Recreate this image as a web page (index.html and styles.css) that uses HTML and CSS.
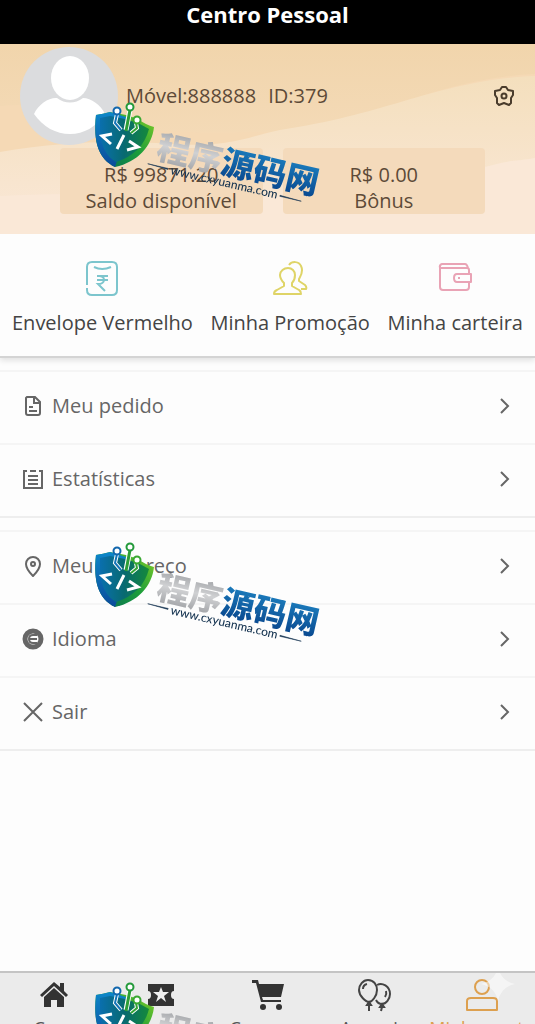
FILE: index.html
```html
<!DOCTYPE html>
<html lang="pt">
  <head>
    <meta charset="UTF-8" />
    <meta name="viewport" content="width=device-width, initial-scale=1.0" />
    <title>Centro Pessoal</title>
    <link rel="stylesheet" href="styles.css">
  </head>
  <body>
    <header class="topbar">
      <h1>Centro Pessoal</h1>
    </header>

    <main>
      <section class="profile">
        <svg class="waves" viewBox="0 0 535 190" preserveAspectRatio="none" aria-hidden="true">
          <defs>
            <linearGradient id="sand" x1="0" y1="0" x2="0" y2="1">
              <stop offset="0" stop-color="#f1d5ac" />
              <stop offset="1" stop-color="#f7dfc2" />
            </linearGradient>
            <linearGradient id="cream" x1="0" y1="0" x2="0" y2="1">
              <stop offset="0" stop-color="#f4dfbd" />
              <stop offset="1" stop-color="#fae8d8" />
            </linearGradient>
          </defs>
          <path d="M0 0H535V190H0Z" fill="url(#sand)" />
          <path d="M0 62C60 56 100 82 150 86S230 88 280 88C380 74 440 34 535 30V190H0Z" fill="#f5d9b5" />
          <path d="M0 108C60 98 110 96 170 100S250 92 280 86C390 70 440 36 535 32V190H0Z" fill="url(#cream)" />
          <path d="M0 152C120 144 330 166 430 138S500 120 535 114V190H0Z" fill="#fae8d7" />
        </svg>
        <div class="user">
          <svg class="avatar" viewBox="0 0 98 98" aria-hidden="true">
            <circle cx="49" cy="49" r="49" fill="#dbdcde" />
            <ellipse cx="50" cy="31" rx="19" ry="22" fill="#fff" />
            <path d="M14 67C18 57 30 50 37 51C45 57 55 57 63 51C71 51 81 58 85 67C76 80 64 87 50 87S23 80 14 67Z" fill="#fff" />
          </svg>
          <p class="user-info"><span>Móvel:888888</span><span>ID:379</span></p>
          <button class="settings" type="button" aria-label="Configurações">
            <svg width="22" height="22" viewBox="0 0 22 22" fill="none" stroke="#4a3c2c" stroke-width="2" stroke-linejoin="round" aria-hidden="true">
              <path d="M7 5L9 2H13L15 5L20 6L20 10L18 13L18 18L16 20L11 18L6 20L4 18V13L2 10L2 6Z" />
              <circle cx="11" cy="11" r="2.500" />
            </svg>
          </button>
        </div>
        <div class="balances">
          <div class="balance"><span>R$ 99871.20</span><span>Saldo disponível</span></div>
          <div class="balance"><span>R$ 0.00</span><span>Bônus</span></div>
        </div>
      </section>

      <nav class="shortcuts">
        <a href="#envelope">
          <svg width="36" height="38" viewBox="0 0 36 38" fill="none" stroke="#7cc5cd" stroke-width="2" aria-hidden="true">
            <path d="M3 25V7Q3 2 8 2H28Q33 2 33 7V30Q33 35 28 35H8Q3 35 3 30V28" />
            <path d="M10 7Q18 11 27 7" />
            <path d="M13 16H24M13 20H24M14 16C22 15 22 24 14 24L21 31" />
          </svg>
          <span>Envelope Vermelho</span>
        </a>
        <a href="#promocao">
          <svg width="36" height="38" viewBox="0 0 36 38" fill="none" stroke="#dfd467" stroke-width="2" stroke-linejoin="round" aria-hidden="true">
            <path d="M16 8C20 8 23 11 23 15C23 19 22 21 20 23V26L27 30Q29 31 29 34H2Q2 31 5 30L12 26V23C10 21 8 19 8 15C8 11 12 8 16 8Z" />
            <path d="M17 5C20 1 27 1 29 6C32 12 28 17 27 19V21L33 25Q35 27 34 29H29" />
          </svg>
          <span>Minha Promoção</span>
        </a>
        <a href="#carteira">
          <svg width="36" height="38" viewBox="0 0 36 38" fill="none" stroke="#e9a3b5" stroke-width="2" stroke-linejoin="round" aria-hidden="true">
            <path d="M32 14V10Q32 8 30 8H3M3 8Q2 5 5 4H28Q30 4 31 8M3 6V27Q3 30 6 30H29Q32 30 32 27V22" />
            <path d="M34 14H20Q17 14 17 18T20 22H34Z" />
            <path d="M21 18H23" />
          </svg>
          <span>Minha carteira</span>
        </a>
      </nav>

      <ul class="menu">
        <li>
          <a href="#pedido">
            <svg class="icon" viewBox="0 0 22 22" aria-hidden="true">
              <path d="M5 2H13L18 7V18Q18 20 16 20H6Q4 20 4 18V3ZM12 2V8H18M7 12H11M7 16H15" />
            </svg>
            <span>Meu pedido</span>
            <svg class="arrow" viewBox="0 0 12 20" aria-hidden="true"><path d="M2 3L9 10L2 17" /></svg>
          </a>
        </li>
        <li>
          <a href="#estatisticas">
            <svg class="icon" viewBox="0 0 22 22" aria-hidden="true">
              <path d="M5 3H2V20H20V3H17M8 3H14M6 8H16M6 12H16M6 16H16" />
            </svg>
            <span>Estatísticas</span>
            <svg class="arrow" viewBox="0 0 12 20" aria-hidden="true"><path d="M2 3L9 10L2 17" /></svg>
          </a>
        </li>
      </ul>

      <ul class="menu">
        <li>
          <a href="#endereco">
            <svg class="icon" viewBox="0 0 22 22" aria-hidden="true">
              <path d="M11 21C6 16 4 13 4 9A7 7 0 0 1 18 9C18 13 16 16 11 21Z" />
              <circle cx="11" cy="9" r="2" />
            </svg>
            <span>Meu endereço</span>
            <svg class="arrow" viewBox="0 0 12 20" aria-hidden="true"><path d="M2 3L9 10L2 17" /></svg>
          </a>
        </li>
        <li>
          <a href="#idioma">
            <svg class="icon" viewBox="0 0 22 22" aria-hidden="true">
              <circle cx="11" cy="11" r="8" stroke-width="5" />
              <path d="M15 7H11Q7 7 7 11T11 15H15M8 11H15" />
            </svg>
            <span>Idioma</span>
            <svg class="arrow" viewBox="0 0 12 20" aria-hidden="true"><path d="M2 3L9 10L2 17" /></svg>
          </a>
        </li>
        <li>
          <a href="#sair">
            <svg class="icon" viewBox="0 0 22 22" aria-hidden="true">
              <path d="M2 2L20 20M20 2L2 20" />
            </svg>
            <span>Sair</span>
            <svg class="arrow" viewBox="0 0 12 20" aria-hidden="true"><path d="M2 3L9 10L2 17" /></svg>
          </a>
        </li>
      </ul>
    </main>

    <nav class="tabbar">
      <a href="#casa">
        <svg width="36" height="36" viewBox="0 0 36 36" fill="#333" aria-hidden="true">
          <path d="M4 18L18 5L24 10V6H28V14L32 18L30 20L18 9L6 20Z" />
          <path d="M8 20L18 11L28 20V30H21V23H15V30H8Z" />
        </svg>
        <span>Casa</span>
      </a>
      <a href="#ganhar">
        <svg width="36" height="36" viewBox="0 0 36 36" fill="#333" aria-hidden="true">
          <path d="M5 7H31V14Q28 14 28 18T31 22V29H5V22Q8 22 8 18T5 14Z" />
          <path d="M18 10L20 15H26L21 19L23 25L18 21L13 25L15 19L10 15H16Z" fill="#f0f0f0" />
        </svg>
        <span>Ganhar</span>
      </a>
      <a href="#compras">
        <svg width="36" height="36" viewBox="0 0 36 36" fill="#333" aria-hidden="true">
          <path d="M2 3H8L9 7H34L31 20H12L13 23H31V25H11L6 6H2Z" />
          <circle cx="13" cy="30" r="3" />
          <circle cx="29" cy="30" r="3" />
        </svg>
        <span>Compras</span>
      </a>
      <a href="#anuncio">
        <svg width="36" height="36" viewBox="0 0 36 36" fill="none" stroke="#444" stroke-width="2" aria-hidden="true">
          <path d="M20 8C25 5 33 9 33 17C33 22 29 27 25 27C22 27 20 25 19 23" />
          <path d="M11 3C17 3 20 8 20 13C20 19 15 25 12 25S2 19 2 13C2 8 6 3 11 3Z" />
          <path d="M6 12Q6 8 10 7M28 20Q30 17 29 14" />
          <path d="M12 25L10 28H14ZM12 28V34M25 27L23 30H27ZM25 30L24 34" />
        </svg>
        <span>Anuncio</span>
      </a>
      <a href="#minha" class="active">
        <svg width="36" height="36" viewBox="0 0 36 36" fill="none" stroke="#dda04f" stroke-width="2" stroke-linejoin="round" aria-hidden="true">
          <circle cx="18" cy="10" r="7" />
          <path d="M3 33V24Q3 21 7 21H29Q33 21 33 24V33Z" />
        </svg>
        <span>Minha conta</span>
      </a>
      <svg class="sparkle" viewBox="0 0 34 34" aria-hidden="true">
        <path d="M17 0Q20 14 34 17Q20 20 17 34Q14 20 0 17Q14 14 17 0Z" fill="#fff" fill-opacity=".5" />
      </svg>
    </nav>

    <div class="watermarks" aria-hidden="true">
      <svg class="watermark" viewBox="0 0 240 115">
        <defs>
          <linearGradient id="shieldLeft" x1="0" y1="0" x2="0" y2="1">
            <stop offset="0" stop-color="#0d87c9" />
            <stop offset="1" stop-color="#0b4b9a" />
          </linearGradient>
          <linearGradient id="shieldRight" x1="1" y1="0" x2="0" y2="1">
            <stop offset="0" stop-color="#86d024" />
            <stop offset=".5" stop-color="#1a9c3c" />
            <stop offset="1" stop-color="#076a58" />
          </linearGradient>
          <linearGradient id="shieldInner" x1="0" y1="0" x2="1" y2="0">
            <stop offset="0" stop-color="#0a6fae" />
            <stop offset=".5" stop-color="#086a70" />
            <stop offset="1" stop-color="#158a3a" />
          </linearGradient>
          <linearGradient id="silver" x1="0" y1="0" x2="0" y2="1">
            <stop offset="0" stop-color="#8f9296" />
            <stop offset=".5" stop-color="#d0d1d3" />
            <stop offset="1" stop-color="#96989c" />
          </linearGradient>
          <linearGradient id="blue" x1="0" y1="0" x2="0" y2="1">
            <stop offset="0" stop-color="#2089c8" />
            <stop offset="1" stop-color="#063f87" />
          </linearGradient>
          <g id="brand">
            <path d="M6 20Q13 19 20 17L36 20L48 24Q56 30 64 32C62 51 48 67 25 72C9 64 3 48 6 20Z" fill="url(#shieldRight)" />
            <path d="M6 20Q13 19 20 17L36 22L35 40L25 72C9 64 3 48 6 20Z" fill="url(#shieldLeft)" />
            <path d="M10 23L20 21L35 24L48 28L59 34C55 50 43 62 26 67C14 60 9 47 10 23Z" fill="url(#shieldInner)" />
            <g fill="none" stroke="#fff" stroke-width="4">
              <path d="M27 19L25 28L31 35M46 28L47 33L41 38" />
              <path d="M40 15L36 35" stroke-width="5" />
            </g>
            <g fill="none" stroke-width="2">
              <path d="M27 19L25 28L31 35" stroke="#1474b8" />
              <path d="M40 15L36 36" stroke="#2d9e38" stroke-width="3" />
              <path d="M46 28L47 33L41 38" stroke="#35a534" />
              <circle cx="27" cy="16" r="3.500" stroke="#1267ad" fill="#fff" />
              <circle cx="40" cy="12" r="3.500" stroke="#249a3b" fill="#fff" />
              <circle cx="47" cy="25" r="3.500" stroke="#3aa832" fill="#fff" />
            </g>
            <path d="M22 39L12 41L21 49M34 40L27 54M39 46L48 52L37 55" fill="none" stroke="#fff" stroke-width="3" />
            <g transform="translate(65 63) rotate(13)">
              <text class="brand-name"><tspan fill="url(#silver)">程序</tspan><tspan fill="url(#blue)">源码网</tspan></text>
            </g>
            <g transform="translate(80 79) rotate(13)">
              <text class="brand-url">www.cxyuanma.com</text>
              <path d="M-24 -5L-3 -5V-4ZM112 -4V-3L134 -3Z" fill="#163451" stroke="#163451" stroke-width=".5" />
            </g>
          </g>
        </defs>
        <use href="#brand" />
      </svg>
      <svg class="watermark" viewBox="0 0 240 115"><use href="#brand" /></svg>
      <svg class="watermark" viewBox="0 0 240 115"><use href="#brand" /></svg>
    </div>
  </body>
</html>
```
FILE: styles.css
```css
* {
  box-sizing: border-box;
}
body {
  margin: 0;
  height: 100vh;
  overflow: hidden;
  display: flex;
  flex-direction: column;
  font-family: "Open Sans", "Noto Sans", sans-serif;
  font-size: 20px;
  line-height: 26px;
  color: #444;
  background-color: #fdfdfd;
}
a {
  color: inherit;
  text-decoration: none;
}
.topbar {
  height: 44px;
  background-color: #000;
  color: #fff;
  text-align: center;
}
.topbar h1 {
  margin: 0;
  font-size: 22px;
  line-height: 28px;
}
main {
  flex: 1;
  min-height: 0;
}
.profile {
  position: relative;
  height: 190px;
  color: #5d4a38;
}
.waves {
  position: absolute;
  width: 100%;
  height: 100%;
}
.user {
  position: relative;
  display: flex;
  align-items: center;
  height: 104px;
  padding: 0 20px;
}
.avatar {
  width: 98px;
  height: 98px;
}
.user-info {
  flex: 1;
  display: flex;
  gap: 12px;
  margin: 0 8px;
}
.settings {
  padding: 0;
  border: none;
  background: none;
  line-height: 0;
  cursor: pointer;
}
.balances {
  position: relative;
  display: grid;
  grid-template-columns: 1fr 1fr;
  gap: 20px;
  padding: 0 50px 0 60px;
}
.balance {
  display: flex;
  flex-direction: column;
  align-items: center;
  padding: 14px 0 0;
  border-radius: 4px;
  background-color: #f4dabb;
}
.shortcuts {
  display: flex;
  justify-content: space-between;
  height: 124px;
  padding: 26px 12px 0;
  border-bottom: 2px solid #d4d4d4;
  box-shadow: 0 2px 6px #ddd;
}
.shortcuts a {
  display: flex;
  flex-direction: column;
  align-items: center;
  gap: 12px;
}
.menu {
  margin: 12px 0 0;
  padding: 0;
  list-style: none;
  color: #666;
  border-top: 2px solid #f5f5f5;
  border-bottom: 2px solid #eee;
}
.menu li + li {
  border-top: 2px solid #f5f5f5;
}
.menu a {
  display: flex;
  align-items: center;
  gap: 8px;
  height: 71px;
  padding: 0 24px 4px 22px;
}
.menu span {
  flex: 1;
}
.icon,
.arrow {
  fill: none;
  stroke: #666;
  stroke-width: 2;
}
.icon {
  width: 22px;
  height: 22px;
}
.arrow {
  width: 12px;
  height: 20px;
}
.tabbar {
  position: relative;
  display: grid;
  grid-template-columns: repeat(5, minmax(0, 1fr));
  height: 53px;
  padding-top: 4px;
  overflow: hidden;
  border-top: 2px solid #c4c4c4;
  background-color: #ebebeb;
  color: #555;
  font-size: 18px;
}
.tabbar a {
  display: flex;
  flex-direction: column;
  align-items: center;
  gap: 2px;
  white-space: nowrap;
}
.tabbar .active {
  color: #dda04f;
}
.sparkle {
  position: absolute;
  right: 20px;
  top: -6px;
  width: 34px;
  height: 34px;
}
.watermarks {
  position: fixed;
  inset: 95px 0 0 90px;
  display: flex;
  flex-direction: column;
  gap: 325px;
  overflow: hidden;
  pointer-events: none;
}
.watermark {
  flex: none;
  width: 240px;
  height: 115px;
}
.brand-name {
  font: 900 33px "Noto Sans CJK SC", sans-serif;
}
.brand-url {
  font: 500 12px Lato, sans-serif;
  fill: #163451;
}
```
